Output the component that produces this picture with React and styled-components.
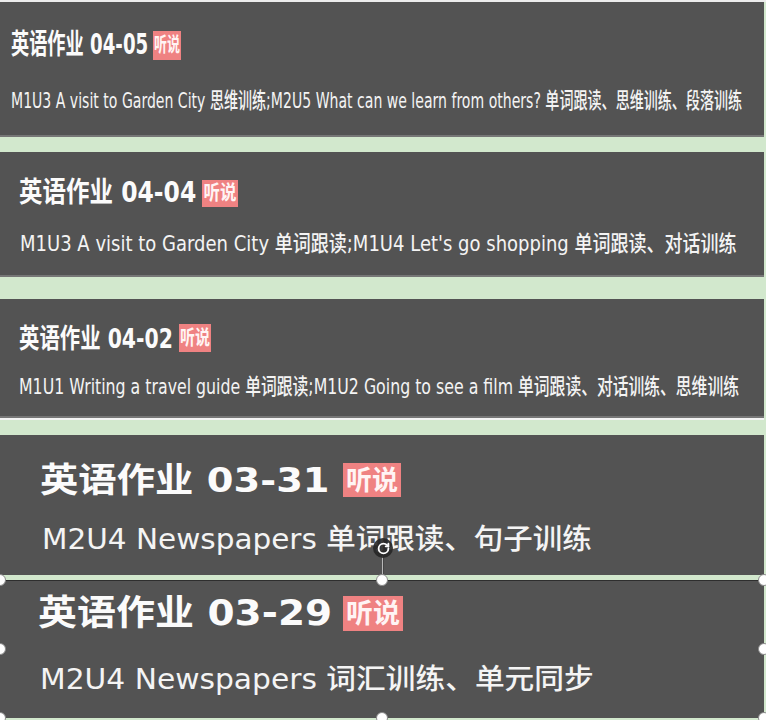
import React, { useLayoutEffect, useRef, useState } from 'react';
import styled, { createGlobalStyle } from 'styled-components';

const Global = createGlobalStyle`
  html, body { margin: 0; padding: 0; background: #d2e8cd; }
  body {
    font-family: "DejaVu Sans", "Noto Sans CJK SC", sans-serif;
    width: 766px; height: 720px; overflow: hidden;
  }
`;

const Page = styled.div`
  width: 766px;
  height: 720px;
  box-sizing: border-box;
  border-top: 2px solid #ececec;
  display: flex;
  flex-direction: column;
  overflow: hidden;
  position: relative;
`;

const CardWrap = styled.div`
  position: relative;
  margin-top: ${(p) => p.$mt}px;
  width: 764px;
  flex: none;
`;

const Card = styled.div`
  box-sizing: content-box;
  width: 764px;
  height: ${(p) => p.$h}px;
  background: #535353;
  border-top: ${(p) => (p.$topLine ? '1px solid #2e2e2e' : 'none')};
  border-bottom: ${(p) => (p.$bottomLine ? '2px solid #767676' : 'none')};
  box-shadow: ${(p) => (p.$whiteLine ? '0 2px 0 #f3f3f3' : 'none')};
  display: flex;
  flex-direction: column;
  color: #fbfbfb;
`;

const TitleRow = styled.div`
  display: flex;
  align-items: center;
  height: 36px;
  margin-top: ${(p) => p.$ty - 18}px;
  padding-left: ${(p) => p.$left}px;
  font-size: ${(p) => p.$fs}px;
  font-weight: bold;
  line-height: 1;
`;

const DescRow = styled.div`
  display: flex;
  align-items: center;
  height: 30px;
  margin-top: ${(p) => p.$gap}px;
  padding-left: ${(p) => p.$left}px;
  font-size: ${(p) => p.$fs}px;
  font-weight: 500;
  line-height: 1;
  color: #f4f4f4;
`;

const FitBox = styled.div`
  flex: none;
  width: ${(p) => p.$w}px;
  white-space: nowrap;
  display: flex;
  justify-content: ${(p) => (p.$center ? 'center' : 'flex-start')};
`;

const FitInner = styled.span`
  display: inline-block;
  white-space: nowrap;
  transform-origin: ${(p) => (p.$center ? '50% 50%' : '0 50%')};
`;

const Badge = styled.div`
  flex: none;
  margin-left: ${(p) => p.$ml}px;
  width: ${(p) => p.$w}px;
  height: ${(p) => p.$h}px;
  background: #ef8282;
  color: #fff4f4;
  font-size: ${(p) => p.$fs}px;
  font-weight: bold;
  display: flex;
  align-items: center;
  justify-content: center;
  overflow: hidden;
`;

const Handle = styled.div`
  position: absolute;
  left: ${(p) => p.$x - 6}px;
  top: ${(p) => p.$y - 6}px;
  width: 12px;
  height: 12px;
  box-sizing: border-box;
  border-radius: 50%;
  background: #ffffff;
  border: 1px solid #8a8a8a;
  z-index: 3;
`;

const RotateLine = styled.div`
  position: absolute;
  left: 382px;
  top: -24px;
  width: 1px;
  height: 24px;
  background: #b8b8b8;
  box-shadow: 1px 0 0 #444;
  z-index: 3;
`;

const RotateKnob = styled.div`
  position: absolute;
  left: 373px;
  top: -42px;
  width: 20px;
  height: 20px;
  border-radius: 50%;
  background: rgba(38, 38, 38, 0.9);
  display: flex;
  align-items: center;
  justify-content: center;
  z-index: 4;
`;

function Fit({ w, center, children }) {
  const ref = useRef(null);
  const [s, setS] = useState(1);
  useLayoutEffect(() => {
    const measure = () => {
      const el = ref.current;
      if (el && el.offsetWidth) setS(w / el.offsetWidth);
    };
    measure();
    if (document.fonts && document.fonts.ready) document.fonts.ready.then(measure);
  }, [w]);
  return (
    <FitBox $w={w} $center={center}>
      <FitInner ref={ref} $center={center} style={{ transform: `scaleX(${s})` }}>
        {children}
      </FitInner>
    </FitBox>
  );
}

const cards = [
  {
    date: '04-05',
    desc: 'M1U3 A visit to Garden City 思维训练;M2U5 What can we learn from others? 单词跟读、思维训练、段落训练',
    mt: 0, h: 133, bottomLine: true,
    left: 11, ty: 43, tfs: 28, tw: 137,
    badge: { ml: 5, w: 28, h: 29, fs: 20, tw: 26 },
    dleft: 11, dy: 99, dfs: 22, dw: 731,
  },
  {
    date: '04-04',
    desc: "M1U3 A visit to Garden City 单词跟读;M1U4 Let's go shopping 单词跟读、对话训练",
    mt: 15, h: 123, bottomLine: true,
    left: 19, ty: 41, tfs: 28, tw: 177,
    badge: { ml: 6, w: 36, h: 27, fs: 20, tw: 33 },
    dleft: 20, dy: 92, dfs: 22, dw: 717,
  },
  {
    date: '04-02',
    desc: 'M1U1 Writing a travel guide 单词跟读;M1U2 Going to see a film 单词跟读、对话训练、思维训练',
    mt: 22, h: 117, bottomLine: true, whiteLine: true,
    left: 19, ty: 39, tfs: 27, tw: 154,
    badge: { ml: 6, w: 32, h: 28, fs: 20, tw: 30 },
    dleft: 19, dy: 88, dfs: 22, dw: 720,
  },
  {
    date: '03-31',
    desc: 'M2U4 Newspapers 单词跟读、句子训练',
    mt: 17, h: 140,
    left: 40, ty: 45, tfs: 34, tw: 290,
    badge: { ml: 13, w: 58, h: 34, fs: 27, tw: 52 },
    dleft: 42, dy: 105, dfs: 28, dw: 550,
  },
  {
    date: '03-29',
    desc: 'M2U4 Newspapers 词汇训练、单元同步',
    mt: 5, h: 137, topLine: true, selected: true,
    left: 38, ty: 32, tfs: 35, tw: 294,
    badge: { ml: 11, w: 60, h: 35, fs: 27, tw: 54 },
    dleft: 40, dy: 99, dfs: 28, dw: 554,
  },
];

function RotateIcon() {
  return (
    <svg width="13" height="13" viewBox="0 0 24 24" fill="none" stroke="#ffffff" strokeWidth="3.4" strokeLinecap="round" strokeLinejoin="round">
      <path d="M21 12a9 9 0 1 1-9-9c2.52 0 4.93 1 6.74 2.74L21 8" />
      <path d="M21 3v5h-5" />
    </svg>
  );
}

function SelectionHandles() {
  const xs = [0, 382, 764];
  const ys = [0, 69, 138];
  const pts = [];
  ys.forEach((y, yi) =>
    xs.forEach((x, xi) => {
      if (yi === 1 && xi === 1) return;
      pts.push([x, y]);
    })
  );
  return (
    <>
      <RotateLine />
      <RotateKnob>
        <RotateIcon />
      </RotateKnob>
      {pts.map(([x, y]) => (
        <Handle key={`${x}-${y}`} $x={x} $y={y} />
      ))}
    </>
  );
}

function HomeworkCard({ c }) {
  return (
    <CardWrap $mt={c.mt}>
      <Card $h={c.h} $topLine={c.topLine} $bottomLine={c.bottomLine} $whiteLine={c.whiteLine}>
        <TitleRow $ty={c.ty} $left={c.left} $fs={c.tfs}>
          <Fit w={c.tw}>英语作业 {c.date}</Fit>
          <Badge $ml={c.badge.ml} $w={c.badge.w} $h={c.badge.h} $fs={c.badge.fs}>
            <Fit w={c.badge.tw} center>听说</Fit>
          </Badge>
        </TitleRow>
        <DescRow $gap={c.dy - c.ty - 18 - 15} $left={c.dleft} $fs={c.dfs}>
          <Fit w={c.dw}>{c.desc}</Fit>
        </DescRow>
      </Card>
      {c.selected && <SelectionHandles />}
    </CardWrap>
  );
}

export default function App() {
  return (
    <>
      <Global />
      <Page>
        {cards.map((c) => (
          <HomeworkCard key={c.date} c={c} />
        ))}
      </Page>
    </>
  );
}
